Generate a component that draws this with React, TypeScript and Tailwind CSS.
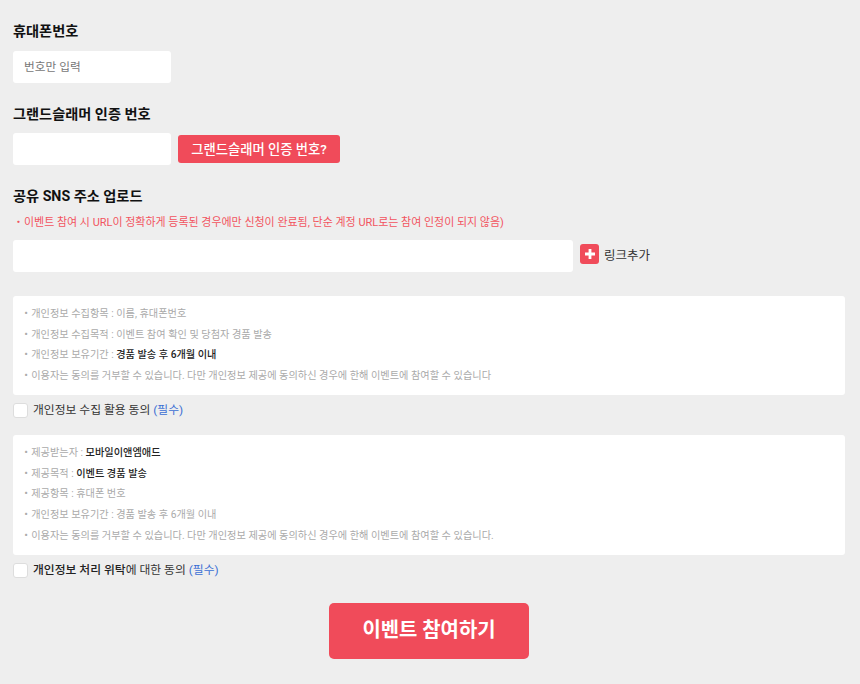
const font = { fontFamily: "Roboto, 'Noto Sans CJK KR', sans-serif" };

const Label = ({ children }: { children: React.ReactNode }) => (
  <h3 className="text-[14.2px] leading-[20px] font-bold text-[#111]">{children}</h3>
);

const Line = ({ children }: { children: React.ReactNode }) => (
  <li className="h-[20.7px] leading-[20.7px] text-[10.2px] text-[#aaa] whitespace-nowrap">・{children}</li>
);

const Strong = ({ children }: { children: React.ReactNode }) => (
  <span className="text-[#222] font-medium">{children}</span>
);

const Check = ({ children }: { children: React.ReactNode }) => (
  <label className="flex items-center gap-[5px] h-[16px] text-[11.8px] text-[#333]">
    <span className="-mt-[2px] w-[15px] h-[15px] bg-white border border-[#ddd] rounded-[3px]" />
    <span>
      {children} <span className="text-[#3b6fd4]">(필수)</span>
    </span>
  </label>
);

export default function App() {
  return (
    <div className="min-h-[684px] bg-[#eeeeee] pl-[13px] pr-[15px] pt-[21px]" style={font}>
      <Label>휴대폰번호</Label>
      <div className="mt-[10px] w-[158px] h-[32px] bg-white rounded-[3px] pl-[11px] text-[11.7px] leading-[31px] text-[#777] pt-[1px]">
        번호만 입력
      </div>

      <div className="mt-[21px]">
        <Label>그랜드슬래머 인증 번호</Label>
      </div>
      <div className="mt-[9px] flex items-center gap-[7px]">
        <div className="w-[158px] h-[32px] bg-white rounded-[3px]" />
        <button className="w-[162px] h-[28px] bg-[#f04b5a] rounded-[3px] text-white text-[13.33px] font-medium leading-[27px]">
          그랜드슬래머 인증 번호?
        </button>
      </div>

      <div className="mt-[21px]">
        <Label>공유 SNS 주소 업로드</Label>
      </div>
      <p className="mt-[9px] text-[10.97px] leading-[16px] text-[#f2545f] whitespace-nowrap">
        ・이벤트 참여 시 URL이 정확하게 등록된 경우에만 신청이 완료됨, 단순 계정 URL로는 참여 인정이 되지 않음)
      </p>
      <div className="mt-[9px] flex items-center gap-[7px]">
        <div className="w-[560px] h-[32px] bg-white rounded-[3px]" />
        <span className="-mt-[4px] w-[19px] h-[20px] bg-[#f04b5a] rounded-[3px] flex items-center justify-center">
          <svg width="10" height="10" viewBox="0 0 10 10">
            <path d="M3.6 0h2.800v3.600H10v2.800H6.400V10H3.600V6.400H0V3.600h3.600z" fill="#fff" />
          </svg>
        </span>
        <span className="-ml-[2px] text-[12.5px] text-[#333]">링크추가</span>
      </div>

      <ul className="mt-[24px] h-[99px] bg-white rounded-[3px] pl-[8px] pt-[8px]">
        <Line>개인정보 수집항목 : 이름, 휴대폰번호</Line>
        <Line>개인정보 수집목적 : 이벤트 참여 확인 및 당첨자 경품 발송</Line>
        <Line>
          개인정보 보유기간 : <Strong>경품 발송 후 6개월 이내</Strong>
        </Line>
        <Line>이용자는 동의를 거부할 수 있습니다. 다만 개인정보 제공에 동의하신 경우에 한해 이벤트에 참여할 수 있습니다</Line>
      </ul>
      <div className="mt-[8px]">
        <Check>개인정보 수집 활용 동의</Check>
      </div>

      <ul className="mt-[16px] h-[120px] bg-white rounded-[3px] pl-[8px] pt-[8px]">
        <Line>
          제공받는자 : <Strong>모바일이앤엠애드</Strong>
        </Line>
        <Line>
          제공목적 : <Strong>이벤트 경품 발송</Strong>
        </Line>
        <Line>제공항목 : 휴대폰 번호</Line>
        <Line>개인정보 보유기간 : 경품 발송 후 6개월 이내</Line>
        <Line>이용자는 동의를 거부할 수 있습니다. 다만 개인정보 제공에 동의하신 경우에 한해 이벤트에 참여할 수 있습니다.</Line>
      </ul>
      <div className="mt-[8px]">
        <Check>
          <span className="font-medium text-[#222]">개인정보 처리 위탁</span>에 대한 동의
        </Check>
      </div>

      <div className="mt-[24px] flex justify-center">
        <button className="w-[200px] h-[56px] bg-[#f04b5a] rounded-[5px] text-white text-[19.9px] font-bold">
          이벤트 참여하기
        </button>
      </div>
    </div>
  );
}
